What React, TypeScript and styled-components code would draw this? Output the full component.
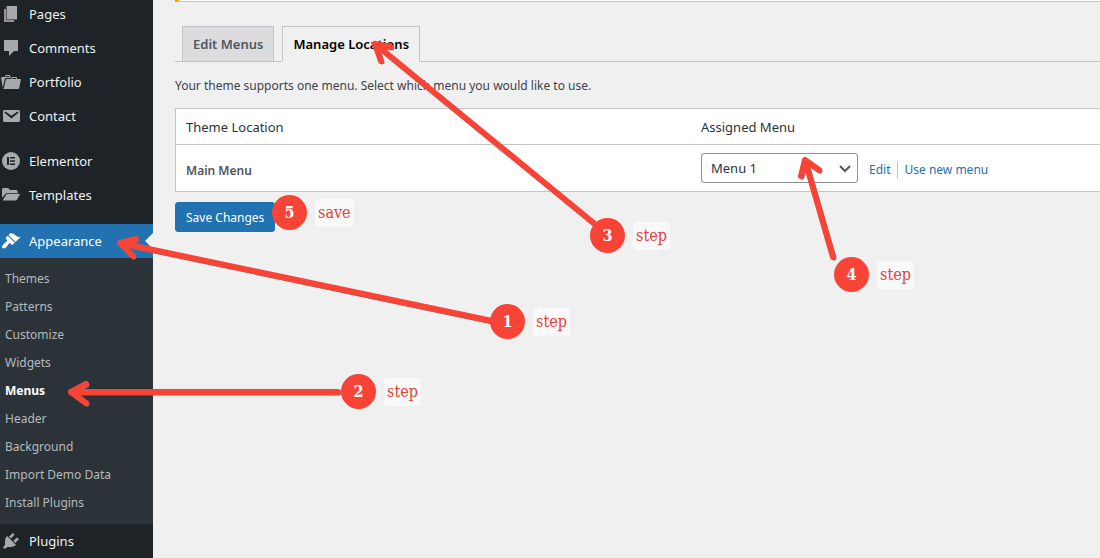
import React from "react";
import styled, { createGlobalStyle, css } from "styled-components";

const GlobalStyle = createGlobalStyle`
  *, *::before, *::after { box-sizing: border-box; }
  body {
    margin: 0;
    overflow: hidden;
    background: #f0f0f1;
    color: #3c434a;
    font-family: "Noto Sans", "Open Sans", sans-serif;
    font-size: 12px;
    line-height: 20px;
  }
  ul { list-style: none; margin: 0; padding: 0; }
  a { text-decoration: none; color: inherit; }
`;

const Page = styled.div`
  position: relative;
  display: flex;
  min-height: 100vh;
  overflow: hidden;
`;

const Sidebar = styled.nav`
  flex: 0 0 153px;
  background: #1d2327;
`;

const MenuList = styled.ul`
  margin-top: -3px;
`;

const MenuItem = styled.li<{ $gap?: number }>`
  margin-top: ${(p) => p.$gap ?? 0}px;
`;

const MenuLink = styled.a<{ $active?: boolean }>`
  position: relative;
  display: flex;
  align-items: center;
  gap: 8px;
  height: 34px;
  padding-left: 1px;
  font-size: 13px;
  color: #f0f0f1;
  svg { color: #a7aaad; }
  ${(p) =>
    p.$active &&
    css`
      background: #2271b1;
      color: #fff;
      svg { color: #fff; }
      &::after {
        content: "";
        position: absolute;
        right: 0;
        top: 9px;
        border: 8px solid transparent;
        border-left-width: 0;
        border-right-color: #f0f0f1;
      }
    `}
`;

const SubMenu = styled.ul`
  padding: 7px 0 7px 5px;
  background: #2c3338;
`;

const SubLink = styled.a<{ $current?: boolean }>`
  display: block;
  line-height: 28px;
  color: ${(p) => (p.$current ? "#fff" : "#b6babd")};
  font-weight: ${(p) => (p.$current ? 700 : 400)};
`;

const Main = styled.main`
  flex: 1;
  min-width: 0;
  padding-left: 22px;
`;

const Notice = styled.div`
  height: 2px;
  background: #fff;
  border-left: 4px solid #dba617;
  border-bottom: 1px solid #c3c4c7;
`;

const Tabs = styled.div`
  display: flex;
  gap: 8px;
  margin-top: 24px;
  padding-left: 7px;
  border-bottom: 1px solid #c3c4c7;
`;

const Tab = styled.a<{ $active?: boolean }>`
  height: 36px;
  margin-bottom: -1px;
  padding: 0 10px;
  border: 1px solid #c3c4c7;
  border-bottom-color: ${(p) => (p.$active ? "#f0f0f1" : "#c3c4c7")};
  background: ${(p) => (p.$active ? "#f0f0f1" : "#dcdcde")};
  color: ${(p) => (p.$active ? "#000" : "#50575e")};
  font-size: 13px;
  font-weight: 600;
  line-height: 34px;
`;

const Description = styled.p`
  margin: 14px 0 12px;
`;

const LocationTable = styled.table`
  width: 100%;
  table-layout: fixed;
  border: 1px solid #c3c4c7;
  border-right: 0;
  border-spacing: 0;
  background: #fff;
  th, td { padding: 0 10px; text-align: left; }
  thead th {
    height: 36px;
    border-bottom: 1px solid #c3c4c7;
    color: #2c3338;
    font-size: 13px;
    font-weight: 400;
  }
  thead th:first-child { width: 515px; }
  tbody th { padding-top: 6px; font-weight: 600; color: #50575e; }
  tbody tr { height: 46px; }
`;

const Assignment = styled.div`
  display: flex;
  align-items: center;
`;

const SelectBox = styled.div`
  display: grid;
  align-items: center;
  width: 157px;
  margin-right: 11px;
  > * { grid-area: 1 / 1; }
  svg { justify-self: end; margin-right: 6px; pointer-events: none; }
`;

const Select = styled.select`
  appearance: none;
  height: 30px;
  padding: 0 24px 0 9px;
  border: 1px solid #8c8f94;
  border-radius: 3px;
  background: #fff;
  color: #2c3338;
  font: inherit;
  font-size: 13px;
`;

const ActionLink = styled.a`
  margin-top: 3px;
  line-height: 18px;
  color: #2271b1;
  & + & {
    margin-left: 7px;
    padding-left: 6px;
    border-left: 1px solid #c3c4c7;
  }
`;

const SaveButton = styled.button`
  height: 30px;
  margin-top: 10px;
  padding: 1px 10px 0;
  border: 1px solid #2271b1;
  border-radius: 3px;
  background: #2271b1;
  color: #fff;
  font: inherit;
`;

const Arrows = styled.svg`
  position: absolute;
  left: 0;
  top: 0;
  pointer-events: none;
`;

const Marker = styled.div<{ $x: number; $y: number }>`
  position: absolute;
  left: ${(p) => p.$x}px;
  top: ${(p) => p.$y}px;
  display: flex;
  align-items: center;
  gap: 8px;
  font-family: "DejaVu Serif Condensed", "DejaVu Serif", serif;
  font-size: 16px;
  color: #e0433a;
`;

const Disc = styled.b`
  width: 35px;
  height: 35px;
  border-radius: 50%;
  background: #f84337;
  color: #fff;
  line-height: 35px;
  text-align: center;
`;

const Caption = styled.span`
  padding: 0 3px;
  border-radius: 4px;
  background: #f9f9f9;
  line-height: 28px;
`;

const Glyph = ({ d, children }: { d?: string; children?: React.ReactNode }) => (
  <svg width="20" height="20" viewBox="0 0 20 20" fill="currentColor" aria-hidden="true">
    {d ? <path d={d} /> : children}
  </svg>
);

const icons = {
  comments:
    "M4 2h12c.6 0 1 .4 1 1v9c0 .6-.4 1-1 1h-3l-5 5v-5H4c-.6 0-1-.4-1-1V3c0-.6.4-1 1-1z",
  portfolio:
    "M4 5H.78c-.37 0-.74.32-.69.84l1.56 9.99S3.5 8.47 3.86 6.7c.11-.53.61-.7.98-.7H10s-.7-2.08-.77-2.31C9.11 3.25 8.89 3 8.45 3H5.14c-.36 0-.7.23-.8.64C4.25 4.04 4 5 4 5zm4.88 0h-4s.42-1 .87-1h2.13c.48 0 1 1 1 1zM2.67 16.25c-.31.47-.76.75-1.26.75h15.73c.54 0 .92-.31 1.03-.83.44-2.19 1.68-8.44 1.68-8.44.07-.5-.3-.73-.62-.73H16V5.53c0-.16-.26-.53-.66-.53h-3.76c-.52 0-.87.58-.87.58L10 7H5.59c-.32 0-.63.19-.69.5 0 0-1.59 6.7-1.72 7.33-.07.37-.22.99-.51 1.42zM15.38 7H11s.58-1 1.13-1h2.29c.71 0 .96 1 .96 1z",
  contact:
    "M3.87 4h13.25C18.37 4 19 4.59 19 5.79v8.42c0 1.19-.63 1.79-1.88 1.79H3.87c-1.25 0-1.88-.6-1.88-1.79V5.79c0-1.2.63-1.79 1.88-1.79zm6.62 8.6l6.74-5.53c.24-.2.43-.66.13-1.07-.29-.41-.82-.42-1.17-.17l-5.7 3.86L4.8 5.83c-.35-.25-.88-.24-1.17.17-.3.41-.11.87.13 1.07z",
  templates:
    "M1 13V4.600C1 3.700 1.700 3 2.600 3H7l2 2h6c.9 0 1.600.7 1.600 1.600V8H6.200c-.9 0-1.600.4-2 1.100zM1.600 15.500l3.500-5.900c.3-.5.7-.8 1.300-.8H18c.6 0 .9.6.6 1.100l-2.600 4.800c-.3.5-.8.8-1.400.8z",
  appearance:
    "M14.48 11.06L7.41 3.99l1.5-1.5c.5-.56 2.3-.47 3.51.32 1.21.8 1.43 1.28 2.91 2.1 1.18.64 2.45 1.26 4.45.85zm-.71.71L6.7 4.7 4.93 6.47c-.39.39-.39 1.02 0 1.41l1.06 1.06c.39.39.39 1.03 0 1.42-.6.6-1.43 1.11-2.21 1.69-.35.26-.7.53-1.01.84C1.43 14.23.4 16.08 1.4 17.07c.99 1 2.84-.03 4.18-1.36.31-.31.58-.66.85-1.02.57-.78 1.08-1.61 1.69-2.21.39-.39 1.02-.39 1.41 0l1.06 1.06c.39.39 1.02.39 1.41 0z",
  plugins:
    "M13.11 4.36L9.87 7.6 8 5.73l3.24-3.24c.35-.34 1.05-.2 1.56.32.52.51.66 1.21.31 1.55zm-8 1.77l.91-1.12 9.01 9.01-1.19.84c-.71.71-2.63 1.16-3.82 1.16H6.14L4.9 17.26c-.59.59-1.54.59-2.12 0-.59-.58-.59-1.53 0-2.12l1.24-1.24v-3.88c0-1.13.4-3.19 1.09-3.89zm7.26 3.97l3.24-3.24c.34-.35 1.04-.21 1.55.31.52.51.66 1.21.31 1.55l-3.24 3.25z",
};

const PagesGlyph = () => (
  <Glyph>
    <path d="M3 5h10v13H3z" fill="#96929f" />
    <path d="M5 2h11v14H5z" fill="#5b5d66" />
    <path d="M6 2h10v13H6z" />
  </Glyph>
);

const ElementorGlyph = () => (
  <Glyph>
    <circle cx="10" cy="10" r="9" />
    <path d="M6 6h2v8H6zM9 6h5v1.600H9zM9 9.200h5v1.600H9zM9 12.400h5V14H9z" fill="#1d2327" />
  </Glyph>
);

const subItems = [
  "Themes",
  "Patterns",
  "Customize",
  "Widgets",
  "Menus",
  "Header",
  "Background",
  "Import Demo Data",
  "Install Plugins",
];

const markers = [
  { n: 1, x: 490, y: 304, label: "step" },
  { n: 2, x: 341, y: 374, label: "step" },
  { n: 3, x: 590, y: 218, label: "step" },
  { n: 4, x: 834, y: 257, label: "step" },
  { n: 5, x: 272, y: 195, label: "save" },
];

const arrowPaths = [
  "M492 321L120 243M136 239L120 243L133 256",
  "M338 392L71 392M86 384L71 392L86 403",
  "M596 225L375 44M391 47L375 44L381 61",
  "M833 257L805 160M801 176L805 160L819 170",
];

export default function App() {
  return (
    <>
      <GlobalStyle />
      <Page>
        <Sidebar aria-label="Admin menu">
          <MenuList>
            <MenuItem><MenuLink href="#pages"><PagesGlyph />Pages</MenuLink></MenuItem>
            <MenuItem><MenuLink href="#comments"><Glyph d={icons.comments} />Comments</MenuLink></MenuItem>
            <MenuItem><MenuLink href="#portfolio"><Glyph d={icons.portfolio} />Portfolio</MenuLink></MenuItem>
            <MenuItem><MenuLink href="#contact"><Glyph d={icons.contact} />Contact</MenuLink></MenuItem>
            <MenuItem $gap={11}><MenuLink href="#elementor"><ElementorGlyph />Elementor</MenuLink></MenuItem>
            <MenuItem><MenuLink href="#templates"><Glyph d={icons.templates} />Templates</MenuLink></MenuItem>
            <MenuItem $gap={12}>
              <MenuLink href="#appearance" $active><Glyph d={icons.appearance} />Appearance</MenuLink>
              <SubMenu>
                {subItems.map((name) => (
                  <li key={name}>
                    <SubLink href="#sub" $current={name === "Menus"}>{name}</SubLink>
                  </li>
                ))}
              </SubMenu>
            </MenuItem>
            <MenuItem><MenuLink href="#plugins"><Glyph d={icons.plugins} />Plugins</MenuLink></MenuItem>
          </MenuList>
        </Sidebar>
        <Main>
          <Notice />
          <Tabs>
            <Tab href="#edit">Edit Menus</Tab>
            <Tab href="#locations" $active>Manage Locations</Tab>
          </Tabs>
          <Description>
            Your theme supports one menu. Select which menu you would like to use.
          </Description>
          <LocationTable>
            <thead>
              <tr>
                <th scope="col">Theme Location</th>
                <th scope="col">Assigned Menu</th>
              </tr>
            </thead>
            <tbody>
              <tr>
                <th scope="row"><label htmlFor="main-menu">Main Menu</label></th>
                <td>
                  <Assignment>
                    <SelectBox>
                      <Select id="main-menu" defaultValue="1">
                        <option value="1">Menu 1</option>
                      </Select>
                      <svg width="14" height="14" viewBox="0 0 14 14" fill="none" stroke="#50575e" strokeWidth="2" aria-hidden="true">
                        <path d="M2 5l5 5 5-5" />
                      </svg>
                    </SelectBox>
                    <ActionLink href="#edit-menu">Edit</ActionLink>
                    <ActionLink href="#new-menu">Use new menu</ActionLink>
                  </Assignment>
                </td>
              </tr>
            </tbody>
          </LocationTable>
          <SaveButton type="button">Save Changes</SaveButton>
        </Main>
        <Arrows width="1100" height="558" fill="none" strokeLinecap="round" strokeLinejoin="round" aria-hidden="true">
          {arrowPaths.map((d) => (
            <g key={d}>
              <path d={d} stroke="#7d7371" strokeWidth="5" transform="translate(1 1)" />
              <path d={d} stroke="#f84337" strokeWidth="6" />
            </g>
          ))}
        </Arrows>
        {markers.map((m) => (
          <Marker key={m.n} $x={m.x} $y={m.y}>
            <Disc>{m.n}</Disc>
            <Caption>{m.label}</Caption>
          </Marker>
        ))}
      </Page>
    </>
  );
}
